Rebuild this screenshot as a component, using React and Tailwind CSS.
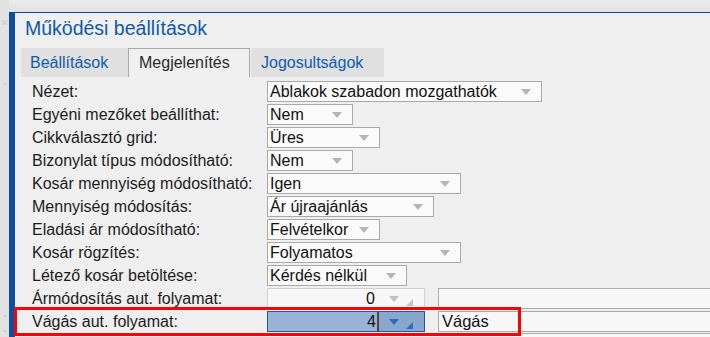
import React from "react";

const rows = [
  { label: "Nézet:", value: "Ablakok szabadon mozgathatók", w: 275 },
  { label: "Egyéni mezőket beállíthat:", value: "Nem", w: 86 },
  { label: "Cikkválasztó grid:", value: "Üres", w: 113 },
  { label: "Bizonylat típus módosítható:", value: "Nem", w: 86 },
  { label: "Kosár mennyiség módosítható:", value: "Igen", w: 194 },
  { label: "Mennyiség módosítás:", value: "Ár újraajánlás", w: 167 },
  { label: "Eladási ár módosítható:", value: "Felvételkor", w: 113 },
  { label: "Kosár rögzítés:", value: "Folyamatos", w: 194 },
  { label: "Létező kosár betöltése:", value: "Kérdés nélkül", w: 140 },
];

function Arrow({ color = "#b5b5b5" }) {
  return (
    <svg width="10" height="6" viewBox="0 0 10 6">
      <path d="M0 0 L10 0 L5 6 Z" fill={color} />
    </svg>
  );
}

function Corner({ color = "#c4c4c4" }) {
  return (
    <svg width="7" height="7" viewBox="0 0 7 7">
      <path d="M7 0 L7 7 L0 7 Z" fill={color} />
    </svg>
  );
}

function Select({ value, w }) {
  return (
    <div
      className="mt-px h-[21px] flex items-center border border-[#a9a9a9] bg-[#fafafa] pl-[2px] pr-[10px]"
      style={{ width: w }}
    >
      <span className="flex-1 text-[16px] leading-none text-[#111] whitespace-nowrap">{value}</span>
      <Arrow />
    </div>
  );
}

export default function App() {
  return (
    <div className="w-[710px] h-[337px] overflow-hidden bg-[#efefef] flex flex-col font-['Liberation_Sans',Arial,sans-serif] relative">
      <div className="h-[13px] shrink-0 bg-gradient-to-b from-[#ececec] to-[#e1e1e1] border-b border-[#0d4a94] ml-[9px]" />
      <div className="flex flex-1 -mt-[14px]">
        <div className="w-[9px] shrink-0 bg-[#e2e2e2] flex flex-col items-center text-[#c8c8c8] text-[9px] leading-none">
          <span className="mt-[20px]">✕</span>
          <span className="mt-[48px]">‸</span>
          <span className="mt-[225px]">⌄</span>
          <span className="mt-[6px]">⌄</span>
        </div>
        <div className="w-[6px] shrink-0 bg-[#0b4f9e] mt-[13px]" />
        <div className="flex-1 flex flex-col pt-[18px]">
          <div className="pl-[10px] text-[19.5px] leading-[22px] text-[#0e5aa7]">Működési beállítások</div>
          <div className="flex mt-[9px] pl-[6px] h-[29px] text-[16px]">
            <div className="w-[107px] bg-[#e0e0e0] text-[#0f5cae] flex items-center pl-[9px]">Beállítások</div>
            <div className="w-[122px] border border-b-0 border-[#a8a8a8] bg-[#efefef] text-[#2b2b2b] flex items-center pl-[10px]">Megjelenítés</div>
            <div className="w-[133px] ml-[1px] bg-[#e0e0e0] text-[#0f5cae] flex items-center pl-[10px]">Jogosultságok</div>
          </div>
          <div className="flex flex-col mt-[3px]">
            {rows.map((r) => (
              <div key={r.label} className="flex h-[23px]">
                <div className="w-[252px] pl-[17px] text-[16px] leading-[23px] text-[#1c1c1c] whitespace-nowrap">{r.label}</div>
                <Select value={r.value} w={r.w} />
              </div>
            ))}
            <div className="flex h-[23px]">
              <div className="w-[252px] pl-[17px] text-[16px] leading-[23px] text-[#1c1c1c] whitespace-nowrap">Ármódosítás aut. folyamat:</div>
              <div className="mt-px h-[21px] w-[158px] flex items-center border border-[#d0d0d0] bg-[#f7f7f7]">
                <span className="flex-1 text-right text-[16px] leading-none text-[#111] pr-[3px]">0</span>
                <div className="w-[46px] h-full flex items-center pl-[11px] gap-[7px]">
                  <Arrow color="#c0c0c0" />
                  <div className="self-end mb-[2px]"><Corner /></div>
                </div>
              </div>
              <div className="ml-[13px] mt-px h-[21px] flex-1 border border-r-0 border-[#aaaaaa] bg-[#f7f7f7]" />
            </div>
            <div className="flex h-[23px]">
              <div className="w-[252px] pl-[17px] text-[16px] leading-[23px] text-[#1c1c1c] whitespace-nowrap">Vágás aut. folyamat:</div>
              <div className="mt-px h-[21px] w-[158px] flex items-center border border-[#23579a] bg-[#98b4d6]">
                <span className="flex-1 text-right text-[16px] leading-none text-[#111] pr-[1px]">4</span>
                <div className="w-[2px] h-full bg-[#5b4128]" />
                <div className="w-[45px] h-full flex items-center pl-[10px] gap-[7px] bg-[#88a7cf]">
                  <Arrow color="#2e6cb8" />
                  <div className="self-end mb-[2px]"><Corner color="#2e6cb8" /></div>
                </div>
              </div>
              <div className="ml-[13px] mt-px h-[21px] flex-1 border border-r-0 border-[#aaaaaa] bg-[#f7f7f7] flex items-center pl-[3px] text-[16.5px] leading-none text-[#111]">Vágás</div>
            </div>
            <div className="h-[4px] border-t border-[#aaaaaa] ml-[252px] bg-[#f7f7f7]" />
          </div>
        </div>
      </div>
      <div className="absolute left-[14px] top-[307px] w-[507px] h-[29px] border-[3px] border-[#ff0000] pointer-events-none" />
    </div>
  );
}
